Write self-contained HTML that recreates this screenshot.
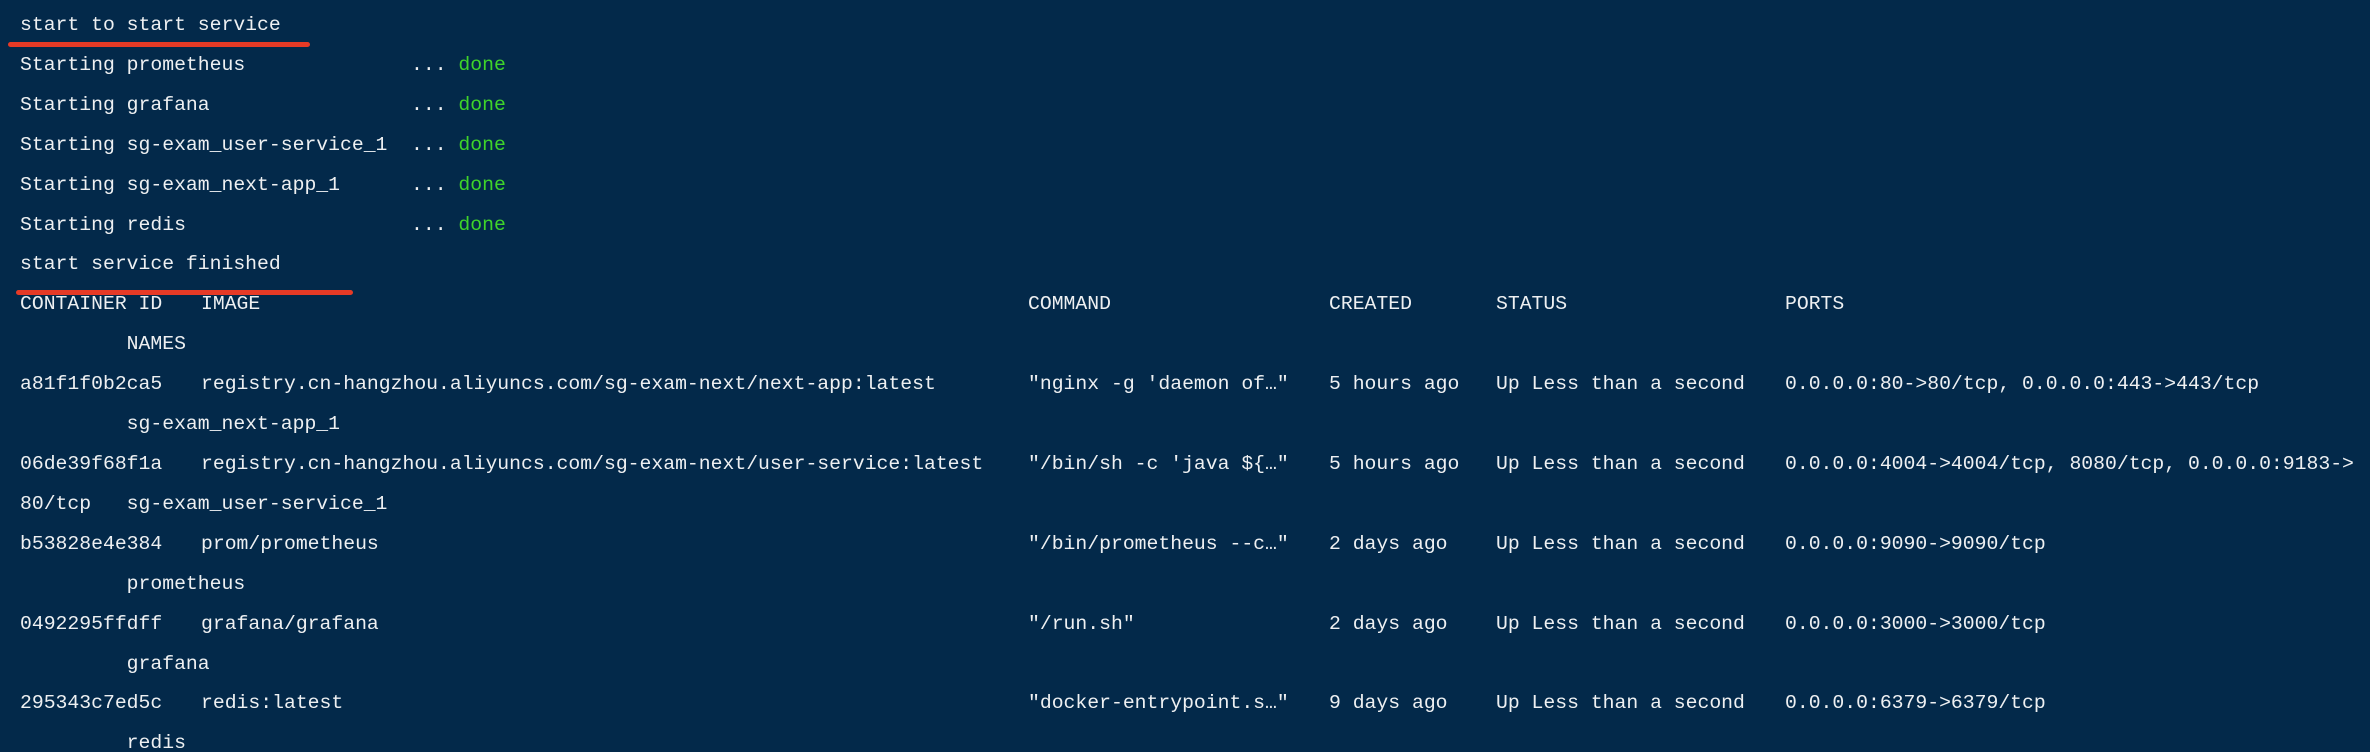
<!DOCTYPE html>
<html><head><meta charset="utf-8"><style>
html,body{margin:0;padding:0;background:#03294a;width:2370px;height:752px;overflow:hidden}
pre{margin:0;padding:6px 0 0 20px;font-family:"Liberation Mono",monospace;font-size:19.76px;line-height:39.9px;color:#eef0f2;white-space:pre}
.g{color:#3fd52a}
.u{position:absolute;height:5px;background:#e63a26;border-radius:3px}
i{font-style:normal;display:inline-block}
.a{width:181px}.b{width:827px}.c{width:301px}.d{width:167px}.e{width:289px}.s{width:391px}
</style></head><body>
<pre>start to start service
<i class="s">Starting prometheus</i>... <span class="g">done</span>
<i class="s">Starting grafana</i>... <span class="g">done</span>
<i class="s">Starting sg-exam_user-service_1</i>... <span class="g">done</span>
<i class="s">Starting sg-exam_next-app_1</i>... <span class="g">done</span>
<i class="s">Starting redis</i>... <span class="g">done</span>
start service finished
<i class="a">CONTAINER ID</i><i class="b">IMAGE</i><i class="c">COMMAND</i><i class="d">CREATED</i><i class="e">STATUS</i>PORTS
         NAMES
<i class="a">a81f1f0b2ca5</i><i class="b">registry.cn-hangzhou.aliyuncs.com/sg-exam-next/next-app:latest</i><i class="c">"nginx -g 'daemon of…"</i><i class="d">5 hours ago</i><i class="e">Up Less than a second</i>0.0.0.0:80->80/tcp, 0.0.0.0:443->443/tcp
         sg-exam_next-app_1
<i class="a">06de39f68f1a</i><i class="b">registry.cn-hangzhou.aliyuncs.com/sg-exam-next/user-service:latest</i><i class="c">"/bin/sh -c 'java ${…"</i><i class="d">5 hours ago</i><i class="e">Up Less than a second</i>0.0.0.0:4004->4004/tcp, 8080/tcp, 0.0.0.0:9183->
80/tcp   sg-exam_user-service_1
<i class="a">b53828e4e384</i><i class="b">prom/prometheus</i><i class="c">"/bin/prometheus --c…"</i><i class="d">2 days ago</i><i class="e">Up Less than a second</i>0.0.0.0:9090->9090/tcp
         prometheus
<i class="a">0492295ffdff</i><i class="b">grafana/grafana</i><i class="c">"/run.sh"</i><i class="d">2 days ago</i><i class="e">Up Less than a second</i>0.0.0.0:3000->3000/tcp
         grafana
<i class="a">295343c7ed5c</i><i class="b">redis:latest</i><i class="c">"docker-entrypoint.s…"</i><i class="d">9 days ago</i><i class="e">Up Less than a second</i>0.0.0.0:6379->6379/tcp
         redis</pre>
<div class="u" style="left:8px;top:42px;width:302px"></div>
<div class="u" style="left:16px;top:290px;width:337px"></div>
</body></html>
